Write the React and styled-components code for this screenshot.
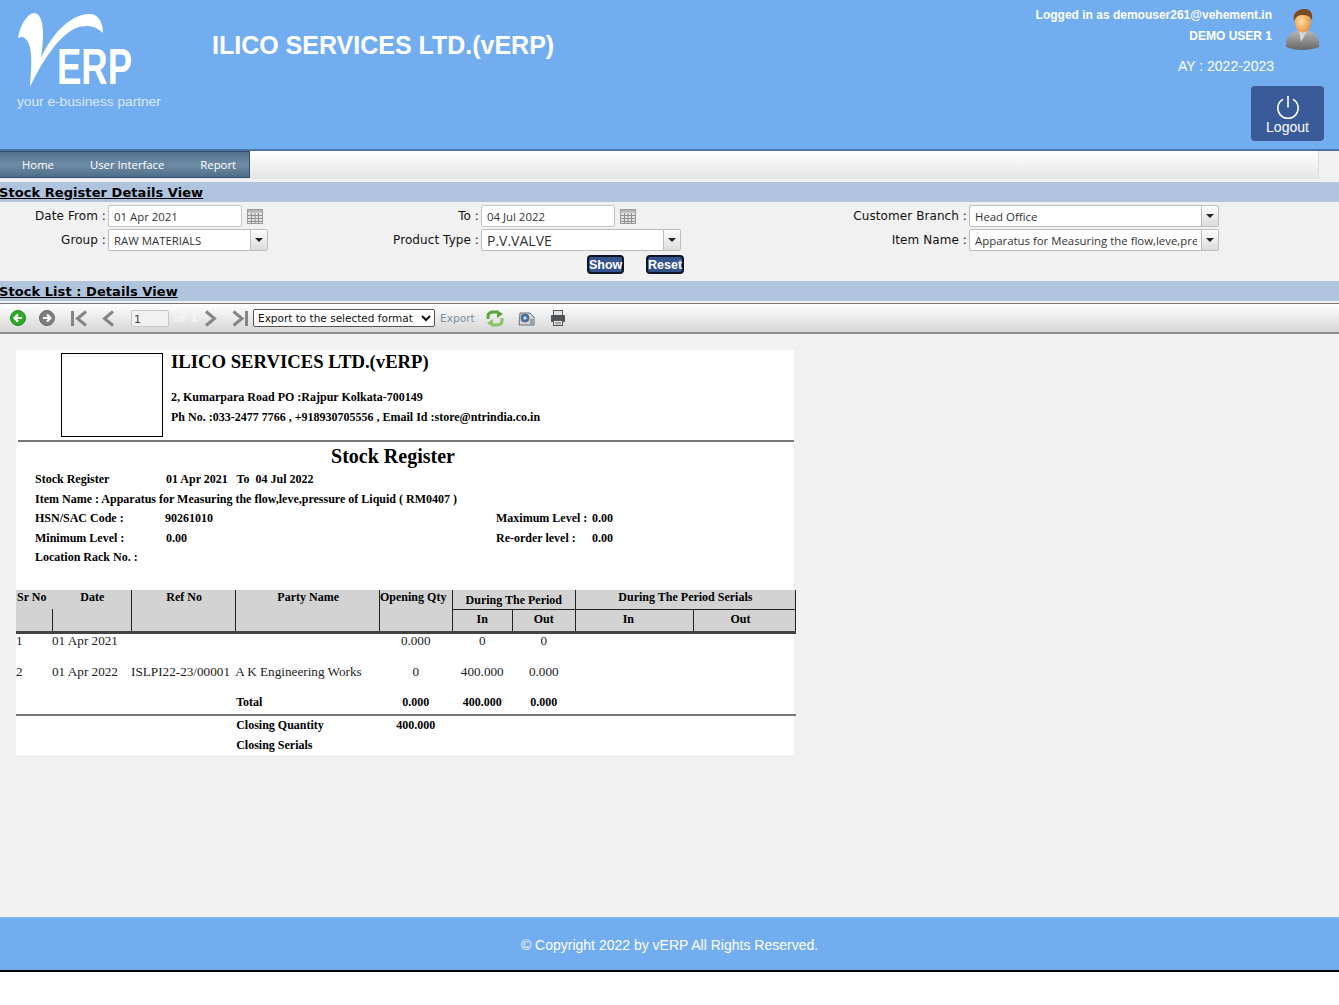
import React from "react";
import styled, { createGlobalStyle } from "styled-components";

const Global = createGlobalStyle`
  html, body { margin: 0; padding: 0; background: #fff; }
  * { box-sizing: border-box; }
`;
const Page = styled.div`
  height: 972px; display: flex; flex-direction: column; background: #f1f1f1;
  font-family: "DejaVu Sans", sans-serif; overflow: hidden;
`;
/* Header */
const Header = styled.header`
  height: 151px; flex: none; display: flex; background: #72aeef;
  border-bottom: 2px solid #4a74a6; color: #fff; font-family: "Liberation Sans", Arial, sans-serif;
`;
const LogoBlock = styled.div`
  width: 211px; flex: none; padding: 12px 0 0 17px; display: flex; flex-direction: column;
`;
const Tagline = styled.div`
  font-size: 13.7px; line-height: 13px; color: #dbe9fa; white-space: nowrap;
`;
const Title = styled.h1`
  margin: 30px 0 0 1px; font-size: 25px; line-height: 30px; font-weight: 700; white-space: nowrap;
`;
const UserBlock = styled.div`
  margin-left: auto; padding: 5px 15px 0 0; display: flex; flex-direction: column; align-items: flex-end;
`;
const UserTop = styled.div`display: flex; gap: 14px; align-items: flex-start; padding-right: 4px;`;
const UserLines = styled.div`
  display: flex; flex-direction: column; align-items: flex-end; font-size: 12px; font-weight: 700; line-height: 21px;
`;
const AvatarSlot = styled.span`display: flex; margin-top: 4px;`;
const Year = styled.div`
  font-size: 14px; line-height: 18px; margin: 7px 50px 0 0;
`;
const LogoutBtn = styled.button`
  width: 73px; height: 55px; margin: 11px 0 0; border: none; border-radius: 4px; background: #3a5a98; color: #fff;
  font: 14px/16px "Liberation Sans", Arial, sans-serif; display: flex; flex-direction: column;
  align-items: center; justify-content: flex-start; padding: 9px 0 0; gap: 0;
`;
/* Menu */
const MenuBar = styled.nav`
  height: 28px; flex: none; width: 1319px; display: flex; align-items: flex-start;
  background: linear-gradient(#fff, #e4e4e4); border-right: 1px solid #ddd;
`;
const Menu = styled.div`
  height: 27px; width: 250px; padding: 1px 0 0 22px; display: flex; gap: 36px; align-items: center;
  background: linear-gradient(#50708c, #6f8ca6 50%, #4d6d88); border: 1px solid #35506c; border-left: none;
`;
const MenuItem = styled.a`
  color: #fff; font: 11.3px/14px "Open Sans", sans-serif; white-space: nowrap;
`;
/* Sections */
const SectionBar = styled.div`
  height: 20px; flex: none; margin-top: ${p => p.$top}px; background: #b0c4de; padding-left: 0;
  font: 700 13px/21px "DejaVu Sans", sans-serif; color: #000; letter-spacing: .06px;
`;
const SectionText = styled.span`text-decoration: underline; margin-left: -1px; display: inline-block;`;
const Form = styled.form`
  height: 79px; flex: none; padding-top: 3px; display: grid; align-content: start;
  grid-template-columns: 106px 160px 209px 200px 284px 250px; column-gap: 2px; row-gap: 2px;
  grid-auto-rows: 22px;
`;
const Label = styled.label`
  text-align: right; font: 12px/23px "DejaVu Sans", sans-serif; color: #111; white-space: nowrap; letter-spacing: .08px;
`;
const DateField = styled.div`display: flex; align-items: center; gap: 5px;`;
const TextInput = styled.input`
  width: ${p => p.$w || 134}px; height: 22px; border: 1px solid #c4c4c4; border-radius: 2px; background: #fff;
  padding: 1px 5px 0; font: 11.4px "Open Sans", sans-serif; color: #333; outline: none;
`;
const Combo = styled.div`
  display: flex; height: 22px; border: 1px solid #bdbdbd; border-radius: 2px; background: #fff; overflow: hidden;
`;
const ComboInput = styled.input`
  flex: 1; min-width: 0; border: none; outline: none; background: transparent; padding: 1px 4px 0 5px;
  font: ${p => p.$size || 11.4}px "Open Sans", sans-serif; color: #333;
`;
const ComboBtn = styled.span`
  width: 17px; flex: none; display: flex; align-items: center; justify-content: center;
  background: linear-gradient(#fdfdfd, #dcdcdc); border-left: 1px solid #bdbdbd;
`;
const Arrow = styled.i`
  width: 0; height: 0; border: 4px solid transparent; border-top: 4px solid #222; border-bottom: none;
`;
const Actions = styled.div`
  grid-column: 4 / 6; display: flex; gap: 22px; padding: 2px 0 0 106px; align-items: flex-start;
`;
const ActionBtn = styled.button`
  height: 19px; width: ${p => p.$w}px; padding: 0; border: 2px solid #101525; border-radius: 4px; background: #35538f;
  color: #fff; font: 700 12.5px/14px "Liberation Sans", Arial, sans-serif; flex: none; overflow: visible;
`;
/* Toolbar */
const Toolbar = styled.div`
  height: 31px; flex: none; margin-top: 2px; display: flex; align-items: center; padding-left: 10px;
  border-top: 1px solid #777; border-bottom: 2px solid #8d8d8d; background: linear-gradient(#fff, #d6d6d6);
`;
const ToolIcon = styled.span`
  display: flex; flex: none; margin-left: ${p => p.$ml || 0}px;
`;
const PageInput = styled.input`
  width: 38px; height: 17px; margin-left: 16px; flex: none; border: 1px solid #c8c8c8; border-radius: 2px; background: #f1f1f1;
  padding: 2px 0 0 2px; font: 11px "DejaVu Sans", sans-serif; color: #444; outline: none;
`;
const OfText = styled.span`
  margin-left: 5px; font: 700 11px "DejaVu Sans", sans-serif; color: #f4f4f4; width: 20px; flex: none; white-space: nowrap;
`;
const ExportSelect = styled.select`
  width: 182px; height: 18px; margin-left: 4px; flex: none; padding: 0; border: 1px solid #555; border-radius: 2px; background: #fff;
  font: 10.5px "DejaVu Sans", sans-serif; color: #111;
`;
const ExportText = styled.span`
  margin-left: 5px; font: 10.6px "DejaVu Sans", sans-serif; color: #7d8ea3; flex: none;
`;
/* Report */
const Main = styled.main`flex: 1; padding: 16px 0 0 16px;`;
const Report = styled.section`
  width: 778px; height: 405px; background: #fff; color: #000; font: 700 12px/20px "Liberation Serif", "Times New Roman", serif;
`;
const Company = styled.div`display: flex; height: 90px; padding: 3px 0 0 45px; gap: 8px;`;
const LogoBox = styled.div`width: 102px; height: 84px; flex: none; border: 1px solid #000; background: #fff;`;
const CompanyInfo = styled.div`display: flex; flex-direction: column;`;
const CompanyName = styled.div`font-size: 18.7px; line-height: 18px; margin-bottom: 17px; white-space: nowrap;`;
const CompanyLine = styled.div`line-height: 19.5px; white-space: nowrap;`;
const Rule = styled.hr`
  margin: 0 0 0 ${p => p.$left || 0}px; height: 2px; border: none; background: #777; flex: none;
`;
const ReportTitle = styled.h2`
  margin: 0; text-align: center; font-size: 20px; line-height: 28px; font-weight: 700; padding-right: 24px; height: 28px;
`;
const MetaRows = styled.div`display: flex; flex-direction: column; padding-left: 19px; height: 120px;`;
const MetaRow = styled.div`
  display: grid; grid-template-columns: ${p => p.$col || 131}px ${p => 461 - (p.$col || 131)}px 96px auto;
  height: 19.5px; line-height: 18.5px; white-space: nowrap;
`;
const Table = styled.table`
  width: 780px; table-layout: fixed; border-collapse: collapse; font: 700 12px/14px "Liberation Serif", "Times New Roman", serif;
`;
const Th = styled.th`
  background: #d3d3d3; vertical-align: top; padding: ${p => p.$pt ?? 0}px ${p => p.$pr || 0}px 0 ${p => p.$pl || 0}px;
  height: ${p => p.$h || 19}px; font-weight: 700;
  text-align: ${p => p.$left ? "left" : "center"}; border-right: ${p => p.$nr ? "none" : "1px solid #222"};
  border-bottom: ${p => p.$end ? "3px solid #444" : p.$line ? "1px solid #222" : "none"}; white-space: nowrap; overflow: visible;
`;
const Td = styled.td`
  vertical-align: top; padding: ${p => p.$pt ?? 2}px 0 0 ${p => (p.$b && !p.$c) ? 1 : 0}px; height: ${p => p.$h}px; white-space: nowrap;
  font-weight: ${p => p.$b ? 700 : 400}; font-size: ${p => p.$b ? 12 : 13.2}px; color: ${p => p.$b ? "#000" : "#222"};
  text-align: ${p => p.$c ? "center" : "left"};
  ${p => p.$rule ? "border-top: 2px solid #777;" : ""}
`;
/* Footer */
const Footer = styled.footer`
  height: 55px; flex: none; display: flex; align-items: center; justify-content: center; background: #72aeef; padding-top: 2px;
  border-top: 1px solid #86bbf2; border-bottom: 2px solid #000; color: #fff;
  font: 14px/20px "Liberation Sans", Arial, sans-serif;
`;

const Logo = () => (
  <svg width="150" height="83" viewBox="17 12 150 83">
    <path fill="#fff" d="M18 38 C20 25 27 14 34 13 C40 13 43 22 43 34 C43 42 42 50 41 58 C50 38 68 14 90 14 C98 14 103 22 103 33 C96 26 86 24 76 28 C58 36 42 62 30 87 C31 70 33 52 28 42 C25 37 22 36 18 38 Z" />
    <text x="57" y="84" fill="#fff" fontFamily="'Liberation Sans', sans-serif" fontWeight="700" fontSize="50" textLength="75" lengthAdjust="spacingAndGlyphs">ERP</text>
  </svg>
);
const Avatar = () => (
  <svg width="34" height="41" viewBox="0 0 34 41">
    <defs>
      <linearGradient id="suit" x1="0" y1="0" x2="0" y2="1"><stop offset="0" stopColor="#b5b5b5" /><stop offset="1" stopColor="#666" /></linearGradient>
      <radialGradient id="skin" cx=".4" cy=".45" r=".7"><stop offset="0" stopColor="#ffdca6" /><stop offset="1" stopColor="#e58a2c" /></radialGradient>
    </defs>
    <path fill="url(#suit)" d="M0 38 C-1 30 3 24 10 22 L24 22 C31 24 34 31 33 38 C24 42 9 42 0 38 Z" />
    <path fill="#d8d8d8" d="M13 22 L15 33 L21 22 Z" />
    <ellipse cx="17" cy="13" rx="8" ry="10.5" fill="url(#skin)" />
    <path fill="#7c4a1e" d="M8 12 C6 3 13 0 19 0 C25 0 27 5 26 11 C24 7 21 6 16 6 C12 6 10 8 8 12 Z" />
  </svg>
);
const PowerIcon = () => (
  <svg width="24" height="24" viewBox="0 0 24 24" fill="none" stroke="#fff" strokeWidth="1.6" strokeLinecap="round">
    <path d="M12 1.5 V12" />
    <path d="M6.5 4.6 A10.2 10.2 0 1 0 17.5 4.6" />
  </svg>
);
const CalendarIcon = () => (
  <svg width="16" height="15" viewBox="0 0 16 15" style={{ flex: "none" }}>
    <rect x=".5" y=".5" width="15" height="14" fill="#e4e4e4" stroke="#9a9a9a" />
    <rect x="1" y="1" width="14" height="2.5" fill="#b5b5b5" />
    <path stroke="#8f8f8f" fill="none" d="M1 6.5H15M1 9.5H15M1 12.5H15M4.5 4V14M8 4V14M11.5 4V14" />
  </svg>
);
const RoundArrow = ({ fill, edge, flip }) => (
  <svg width="16" height="16" viewBox="0 0 16 16">
    <circle cx="8" cy="8" r="7.5" fill={fill} stroke={edge} />
    <path d={flip ? "M4 8H11M8 4.5L11.5 8L8 11.5" : "M12 8H5M8 4.5L4.5 8L8 11.5"} stroke="#fff" strokeWidth="2.2" fill="none" />
  </svg>
);
const Nav = ({ kind }) => {
  if (kind === "first") return (
    <svg width="18" height="17" viewBox="0 0 18 17" fill="none" stroke="#858585" strokeWidth="3">
      <path d="M2.5 1 V16" /><path d="M16 1.5 L7.5 8.5 L16 15.5" />
    </svg>
  );
  if (kind === "last") return (
    <svg width="17" height="17" viewBox="0 0 17 17" fill="none" stroke="#858585" strokeWidth="3">
      <path d="M14.5 1 V16" /><path d="M1.5 1.5 L10 8.5 L1.5 15.5" />
    </svg>
  );
  return (
    <svg width="14" height="17" viewBox="0 0 14 17" fill="none" stroke="#858585" strokeWidth="3">
      <path d={kind === "prev" ? "M12 1.5 L3.5 8.5 L12 15.5" : "M2 1.5 L10.5 8.5 L2 15.5"} />
    </svg>
  );
};
const RefreshIcon = () => (
  <svg width="18" height="17" viewBox="0 0 18 17" fill="none">
    <path d="M2 9 V6 C2 3 5 2 8 2 H12" stroke="#5aa83c" strokeWidth="3" />
    <path d="M11 0 L17 4 L11 8 Z" fill="#5aa83c" />
    <path d="M16 8 V11 C16 14 13 15 10 15 H6" stroke="#86c465" strokeWidth="3" />
    <path d="M7 17 L1 13 L7 9 Z" fill="#86c465" />
  </svg>
);
const FindIcon = () => (
  <svg width="17" height="16" viewBox="0 0 17 16">
    <path d="M2 3 H12 L16 7 V15 H1 Z" fill="#cfd4da" stroke="#6b7178" />
    <circle cx="7" cy="8" r="4" fill="#3f74b8" stroke="#5d6770" />
    <circle cx="7" cy="8" r="1.6" fill="#dfe9f6" />
    <rect x="12" y="9" width="3" height="5" fill="#9aa1a8" />
  </svg>
);
const PrintIcon = () => (
  <svg width="16" height="16" viewBox="0 0 16 16">
    <rect x="3.5" y=".5" width="9" height="5" fill="#e2e2e2" stroke="#555" />
    <rect x="1" y="5" width="14" height="7" rx="1" fill="#4e5358" />
    <rect x="3.5" y="10.5" width="9" height="5" fill="#f0f0f0" stroke="#555" />
    <path d="M5 12.5H11M5 14H11" stroke="#888" />
  </svg>
);

const ComboField = ({ value, size, name }) => (
  <Combo>
    <ComboInput aria-label={name} $size={size} value={value} readOnly />
    <ComboBtn><Arrow /></ComboBtn>
  </Combo>
);

export default function App() {
  return (
    <Page>
      <Global />
      <Header>
        <LogoBlock>
          <Logo />
          <Tagline>your e-business partner</Tagline>
        </LogoBlock>
        <Title>ILICO SERVICES LTD.(vERP)</Title>
        <UserBlock>
          <UserTop>
            <UserLines>
              <span>Logged in as demouser261@vehement.in</span>
              <span>DEMO USER 1</span>
            </UserLines>
            <AvatarSlot><Avatar /></AvatarSlot>
          </UserTop>
          <Year>AY : 2022-2023</Year>
          <LogoutBtn type="button"><PowerIcon /><span>Logout</span></LogoutBtn>
        </UserBlock>
      </Header>
      <MenuBar>
        <Menu>
          <MenuItem>Home</MenuItem>
          <MenuItem>User Interface</MenuItem>
          <MenuItem>Report</MenuItem>
        </Menu>
      </MenuBar>
      <SectionBar $top={3}><SectionText>Stock Register Details View</SectionText></SectionBar>
      <Form>
        <Label>Date From :</Label>
        <DateField><TextInput value="01 Apr 2021" readOnly /><CalendarIcon /></DateField>
        <Label>To :</Label>
        <DateField><TextInput value="04 Jul 2022" readOnly /><CalendarIcon /></DateField>
        <Label>Customer Branch :</Label>
        <ComboField name="Customer Branch" value="Head Office" />
        <Label>Group :</Label>
        <ComboField name="Group" value="RAW MATERIALS" />
        <Label>Product Type :</Label>
        <ComboField name="Product Type" value="P.V.VALVE" size={14} />
        <Label>Item Name :</Label>
        <ComboField name="Item Name" value="Apparatus for Measuring the flow,leve,pressure of Liquid" />
        <Actions>
          <ActionBtn type="button" $w={37}>Show</ActionBtn>
          <ActionBtn type="button" $w={38}>Reset</ActionBtn>
        </Actions>
      </Form>
      <SectionBar $top={0}><SectionText>Stock List : Details View</SectionText></SectionBar>
      <Toolbar>
        <ToolIcon><RoundArrow fill="#2fa92a" edge="#1f8a1c" /></ToolIcon>
        <ToolIcon $ml={13}><RoundArrow fill="#7d7d7d" edge="#666" flip /></ToolIcon>
        <ToolIcon $ml={15}><Nav kind="first" /></ToolIcon>
        <ToolIcon $ml={13}><Nav kind="prev" /></ToolIcon>
        <PageInput defaultValue="1" />
        <OfText>of 1</OfText>
        <ToolIcon $ml={10}><Nav kind="next" /></ToolIcon>
        <ToolIcon $ml={14}><Nav kind="last" /></ToolIcon>
        <ExportSelect defaultValue="x"><option value="x">Export to the selected format</option></ExportSelect>
        <ExportText>Export</ExportText>
        <ToolIcon $ml={11}><RefreshIcon /></ToolIcon>
        <ToolIcon $ml={14}><FindIcon /></ToolIcon>
        <ToolIcon $ml={15}><PrintIcon /></ToolIcon>
      </Toolbar>
      <Main>
        <Report>
          <Company>
            <LogoBox />
            <CompanyInfo>
              <CompanyName>ILICO SERVICES LTD.(vERP)</CompanyName>
              <CompanyLine>2, Kumarpara Road PO :Rajpur Kolkata-700149</CompanyLine>
              <CompanyLine>Ph No. :033-2477 7766 , +918930705556 , Email Id :store@ntrindia.co.in</CompanyLine>
            </CompanyInfo>
          </Company>
          <Rule $left={2} />
          <ReportTitle>Stock Register</ReportTitle>
          <MetaRows>
            <MetaRow><span>Stock Register</span><span>01 Apr 2021 &nbsp; To &nbsp;04 Jul 2022</span></MetaRow>
            <MetaRow><span>Item Name : Apparatus for Measuring the flow,leve,pressure of Liquid ( RM0407 )</span></MetaRow>
            <MetaRow $col={130}><span>HSN/SAC Code :</span><span>90261010</span><span>Maximum Level :</span><span>0.00</span></MetaRow>
            <MetaRow><span>Minimum Level :</span><span>0.00</span><span>Re-order level :</span><span>0.00</span></MetaRow>
            <MetaRow><span>Location Rack No. :</span></MetaRow>
          </MetaRows>
          <Table>
            <colgroup>
              {[36, 79, 104, 144, 73, 60, 63, 118, 102].map((w, i) => <col key={i} style={{ width: w }} />)}
            </colgroup>
            <thead>
              <tr>
                <Th $left $nr $pl={1}>Sr No</Th>
                <Th $pl={2}>Date</Th>
                <Th rowSpan={2} $pl={2} $end>Ref No</Th>
                <Th rowSpan={2} $h={40} $pl={2} $end>Party Name</Th>
                <Th rowSpan={2} $pr={5} $end>Opening Qty</Th>
                <Th colSpan={2} $line $pt={3}>During The Period</Th>
                <Th colSpan={2} $line>During The Period Serials</Th>
              </tr>
              <tr>
                <Th $h={23} $end />
                <Th $h={23} $end />
                <Th $h={23} $pt={2} $end>In</Th>
                <Th $h={23} $pt={2} $end>Out</Th>
                <Th $h={23} $pt={2} $end $pr={12}>In</Th>
                <Th $h={23} $pt={2} $end $pr={8}>Out</Th>
              </tr>
            </thead>
            <tbody>
              <tr>
                <Td $h={31} $pt={0}>1</Td><Td $pt={0}>01 Apr 2021</Td><Td /><Td /><Td $c $pt={0}>0.000</Td><Td $c $pt={0}>0</Td><Td $c $pt={0}>0</Td><Td /><Td />
              </tr>
              <tr>
                <Td $h={30}>2</Td><Td>01 Apr 2022</Td><Td>ISLPI22-23/00001</Td><Td>A K Engineering Works</Td>
                <Td $c>0</Td><Td $c>400.000</Td><Td $c>0.000</Td><Td /><Td />
              </tr>
              <tr>
                <Td $h={22} /><Td /><Td /><Td $b>Total</Td><Td $b $c>0.000</Td><Td $b $c>400.000</Td><Td $b $c>0.000</Td><Td /><Td />
              </tr>
              <tr>
                <Td $rule $h={20} /><Td $rule /><Td $rule /><Td $rule $b>Closing Quantity</Td><Td $rule $b $c>400.000</Td><Td $rule /><Td $rule /><Td $rule /><Td $rule />
              </tr>
              <tr>
                <Td $h={19} /><Td /><Td /><Td $b $pt={3}>Closing Serials</Td><Td /><Td /><Td /><Td /><Td />
              </tr>
            </tbody>
          </Table>
        </Report>
      </Main>
      <Footer>© Copyright 2022 by vERP All Rights Reserved.</Footer>
    </Page>
  );
}
